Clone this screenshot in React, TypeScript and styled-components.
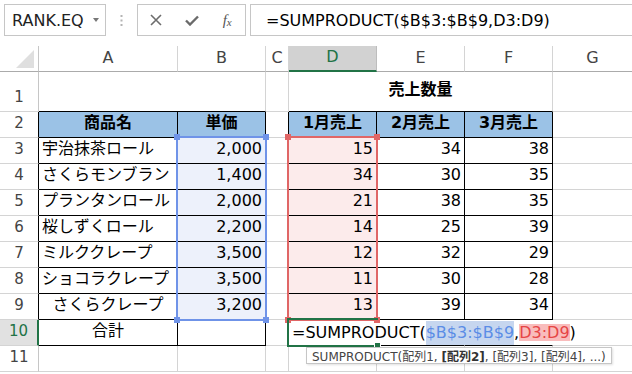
import React from "react";
import styled, { createGlobalStyle } from "styled-components";

const GlobalStyle = createGlobalStyle`
  html, body {
    margin: 0;
    padding: 0;
    background: #fff;
  }
  body {
    font-family: "DejaVu Sans", "Noto Sans CJK JP", sans-serif;
    overflow: hidden;
  }
`;

const GRID = "#d4d4d4";
const BLACK = "#000";
const GREEN = "#217346";
const HEAD_FILL = "#9bc2e6";
const BLUE = "#6f93e8";
const RED = "#e06666";
const BLUE_FILL = "#edf1fb";
const RED_FILL = "#fcebeb";

type Align = "left" | "center" | "right";

type Spec = {
  row: number;
  col: number;
  span?: number;
  text?: React.ReactNode;
  align?: Align;
  bold?: boolean;
  bg?: string;
};

const names = [
  "宇治抹茶ロール",
  "さくらモンブラン",
  "プランタンロール",
  "桜しずくロール",
  "ミルククレープ",
  "ショコラクレープ",
  "さくらクレープ",
];
const prices = ["2,000", "1,400", "2,000", "2,200", "3,500", "3,500", "3,200"];
const sales = [
  [15, 34, 38],
  [34, 30, 35],
  [21, 38, 35],
  [14, 25, 39],
  [12, 32, 29],
  [11, 30, 28],
  [13, 39, 34],
];
const colLetters = ["A", "B", "C", "D", "E", "F", "G"];

// sheet columns: 1 = A ... 7 = G ; sheet rows 1..11
const inTable = (r: number, c: number) =>
  (r >= 2 && r <= 10 && (c === 1 || c === 2)) || (r >= 2 && r <= 10 && c >= 4 && c <= 6);

const buildCells = (): Spec[] => {
  const cells: Spec[] = [];
  for (let r = 1; r <= 11; r++) {
    for (let c = 1; c <= 7; c++) {
      if (r === 1 && c === 1) {
        cells.push({ row: r, col: c, span: 2 });
        continue;
      }
      if (r === 1 && c === 2) continue;
      if (r === 1 && c === 4) {
        cells.push({ row: r, col: c, span: 3, text: "売上数量", align: "center", bold: true });
        continue;
      }
      if (r === 1 && (c === 5 || c === 6)) continue;
      const s: Spec = { row: r, col: c };
      if (r === 2) {
        const heads: Record<number, string> = { 1: "商品名", 2: "単価", 4: "1月売上", 5: "2月売上", 6: "3月売上" };
        if (heads[c]) {
          s.text = heads[c];
          s.bold = true;
          s.align = "center";
          s.bg = HEAD_FILL;
        }
      }
      if (r >= 3 && r <= 9) {
        const i = r - 3;
        if (c === 1) {
          s.text = names[i];
          s.align = r === 9 ? "center" : "left";
        }
        if (c === 2) {
          s.text = prices[i];
          s.align = "right";
          s.bg = BLUE_FILL;
        }
        if (c >= 4 && c <= 6) {
          s.text = String(sales[i][c - 4]);
          s.align = "right";
          if (c === 4) s.bg = RED_FILL;
        }
      }
      if (r === 10 && c === 1) {
        s.text = "合計";
        s.align = "center";
      }
      cells.push(s);
    }
  }
  return cells;
};

const rightColor = (s: Spec) => {
  const end = s.col + (s.span ?? 1) - 1;
  if (s.row === 10 && end >= 4 && end <= 6) return "transparent";
  if (inTable(s.row, end) || inTable(s.row, end + 1)) return BLACK;
  return GRID;
};

const bottomColor = (s: Spec) => {
  if (inTable(s.row, s.col) || inTable(s.row + 1, s.col)) return BLACK;
  return GRID;
};

const App: React.FC = () => {
  const cells = buildCells();
  return (
    <Page>
      <GlobalStyle />
      <TopBar>
        <NameBox>
          RANK.EQ
          <DropArrow />
        </NameBox>
        <Grip>
          <svg width="3" height="11" viewBox="0 0 3 11">
            <rect x="0.5" y="0" width="2" height="2" fill="#b4b4b4" />
            <rect x="0.5" y="4.5" width="2" height="2" fill="#b4b4b4" />
            <rect x="0.5" y="9" width="2" height="2" fill="#b4b4b4" />
          </svg>
        </Grip>
        <ButtonBox>
          <IconSlot>
            <svg width="12" height="12" viewBox="0 0 12 12">
              <path d="M1 1 L11 11 M11 1 L1 11" stroke="#6d6d6d" strokeWidth="1.6" fill="none" />
            </svg>
          </IconSlot>
          <IconSlot>
            <svg width="14" height="11" viewBox="0 0 14 11">
              <path d="M1 5.5 L5 9.5 L13 1.5" stroke="#6a6a6a" strokeWidth="2.4" fill="none" />
            </svg>
          </IconSlot>
          <IconSlot>
            <Fx>
              f<sub>x</sub>
            </Fx>
          </IconSlot>
        </ButtonBox>
        <FormulaBox>=SUMPRODUCT($B$3:$B$9,D3:D9)</FormulaBox>
      </TopBar>

      <Sheet>
        <Corner />
        {colLetters.map((l, i) => (
          <ColHead key={l} $col={i + 2} $active={l === "D"}>
            {l}
          </ColHead>
        ))}
        {Array.from({ length: 11 }, (_, i) => i + 1).map((r) => (
          <RowHead key={r} $row={r + 1} $active={r === 10} $edge={r >= 2 && r <= 10 ? BLACK : "#c6c6c6"}>
            {r}
          </RowHead>
        ))}
        {cells.map((s) => (
          <Cell
            key={`${s.row}-${s.col}`}
            $row={s.row + 1}
            $col={s.col + 1}
            $span={s.span ?? 1}
            $align={s.align ?? "left"}
            $bold={!!s.bold}
            $bg={s.bg ?? "#fff"}
            $right={rightColor(s)}
            $bottom={bottomColor(s)}
            $tall={s.row === 1}
          >
            {s.text}
          </Cell>
        ))}

        <RangeBox $color={BLUE} $col={3} $row={4} $rows={7}>
          <Handle $color={BLUE} $x="left" $y="top" />
          <Handle $color={BLUE} $x="right" $y="top" />
          <Handle $color={BLUE} $x="left" $y="bottom" />
          <Handle $color={BLUE} $x="right" $y="bottom" />
        </RangeBox>
        <RangeBox $color={RED} $col={5} $row={4} $rows={7}>
          <Handle $color={RED} $x="left" $y="top" />
          <Handle $color={RED} $x="right" $y="top" />
          <Handle $color={RED} $x="left" $y="bottom" />
          <Handle $color={RED} $x="right" $y="bottom" />
        </RangeBox>

        <ActiveCell>
          <FillHandle />
          <Tip>
            SUMPRODUCT(配列1, <b>[配列2]</b>, [配列3], [配列4], ...)
          </Tip>
        </ActiveCell>

        <OverflowText>
          =SUMPRODUCT(<RefBlue>$B$3:$B$9</RefBlue>,<RefRed>D3:D9</RefRed>)
        </OverflowText>
      </Sheet>
    </Page>
  );
};

const Page = styled.div`
  width: 632px;
  height: 374px;
  overflow: hidden;
  background: #fff;
`;

const TopBar = styled.div`
  display: flex;
  align-items: flex-start;
  height: 46px;
  padding: 4px 0 0 4px;
  box-sizing: border-box;
`;

const NameBox = styled.div`
  width: 102px;
  height: 32px;
  box-sizing: border-box;
  border: 1px solid #c6c6c6;
  display: flex;
  align-items: center;
  padding-left: 7px;
  font-size: 16px;
  color: #222;
`;

const DropArrow = styled.span`
  margin-left: auto;
  margin-right: 6px;
  width: 0;
  height: 0;
  border-left: 3.5px solid transparent;
  border-right: 3.5px solid transparent;
  border-top: 4px solid #777;
`;

const Grip = styled.div`
  width: 31px;
  height: 32px;
  display: flex;
  align-items: center;
  justify-content: center;
`;

const ButtonBox = styled.div`
  width: 109px;
  height: 32px;
  box-sizing: border-box;
  border: 1px solid #c6c6c6;
  display: flex;
  align-items: center;
`;

const IconSlot = styled.div`
  width: 36px;
  display: flex;
  justify-content: center;
  align-items: center;
`;

const Fx = styled.span`
  font-family: "Liberation Serif", serif;
  font-style: italic;
  font-size: 15px;
  color: #555;

  sub {
    font-size: 11px;
    vertical-align: baseline;
    position: relative;
    top: 1px;
  }
`;

const FormulaBox = styled.div`
  flex: 1;
  margin-left: 4px;
  height: 32px;
  box-sizing: border-box;
  border: 1px solid #c6c6c6;
  border-right: none;
  display: flex;
  align-items: center;
  padding-left: 15px;
  font-size: 16px;
  color: #000;
  white-space: nowrap;
`;

const Sheet = styled.div`
  display: grid;
  grid-template-columns: 39px 139px 88px 23px 88px 88px 88px 80px;
  grid-template-rows: 26px 40px repeat(10, 26px);
`;

const Corner = styled.div`
  grid-row: 1;
  grid-column: 1;
  box-sizing: border-box;
  border-right: 1px solid #c6c6c6;
  border-bottom: 1px solid #ababab;
  position: relative;

  &::after {
    content: "";
    position: absolute;
    right: 4px;
    bottom: 3px;
    width: 0;
    height: 0;
    border-left: 18px solid transparent;
    border-bottom: 18px solid #dfdfdf;
  }
`;

const ColHead = styled.div<{ $col: number; $active: boolean }>`
  grid-row: 1;
  grid-column: ${({ $col }) => $col};
  box-sizing: border-box;
  display: flex;
  align-items: center;
  justify-content: center;
  padding-bottom: 3px;
  font-size: 16px;
  color: ${({ $active }) => ($active ? GREEN : "#444")};
  background: ${({ $active }) => ($active ? "#d2d2d2" : "#fff")};
  border-right: 1px solid ${({ $active }) => ($active ? "#bdbdbd" : GRID)};
  border-bottom: ${({ $active }) => ($active ? `2px solid ${GREEN}` : "1px solid #ababab")};
`;

const RowHead = styled.div<{ $row: number; $active: boolean; $edge: string }>`
  grid-row: ${({ $row }) => $row};
  grid-column: 1;
  box-sizing: border-box;
  display: flex;
  align-items: flex-end;
  justify-content: center;
  padding-bottom: 4px;
  line-height: 20px;
  font-size: 15px;
  color: ${({ $active }) => ($active ? GREEN : "#444")};
  background: ${({ $active }) => ($active ? "#e1e1e1" : "#fff")};
  border-bottom: 1px solid ${GRID};
  border-right: ${({ $active, $edge }) => ($active ? `2px solid ${GREEN}` : `1px solid ${$edge}`)};
`;

const Cell = styled.div<{
  $row: number;
  $col: number;
  $span: number;
  $align: Align;
  $bold: boolean;
  $bg: string;
  $right: string;
  $bottom: string;
  $tall: boolean;
}>`
  grid-row: ${({ $row }) => $row};
  grid-column: ${({ $col, $span }) => `${$col} / span ${$span}`};
  box-sizing: border-box;
  display: flex;
  align-items: ${({ $tall }) => ($tall ? "center" : "flex-end")};
  justify-content: ${({ $align }) =>
    $align === "left" ? "flex-start" : $align === "right" ? "flex-end" : "center"};
  padding: 0 3px 4px 3px;
  line-height: 20px;
  font-size: 16px;
  font-weight: ${({ $bold }) => ($bold ? 700 : 400)};
  color: #000;
  white-space: nowrap;
  background: ${({ $bg }) => $bg};
  border-right: 1px solid ${({ $right }) => $right};
  border-bottom: 1px solid ${({ $bottom }) => $bottom};
`;

const RangeBox = styled.div<{ $color: string; $col: number; $row: number; $rows: number }>`
  grid-column: ${({ $col }) => $col};
  grid-row: ${({ $row, $rows }) => `${$row} / span ${$rows}`};
  margin: -2px -1px -1px -2px;
  border: 2px solid ${({ $color }) => $color};
  position: relative;
  z-index: 2;
  pointer-events: none;
`;

const Handle = styled.span<{ $color: string; $x: "left" | "right"; $y: "top" | "bottom" }>`
  position: absolute;
  width: 6px;
  height: 6px;
  background: ${({ $color }) => $color};
  ${({ $x }) => ($x === "left" ? "left: -4px;" : "right: -4px;")}
  ${({ $y }) => ($y === "top" ? "top: -4px;" : "bottom: -4px;")}
`;

const OverflowText = styled.div`
  grid-column: 5 / 9;
  grid-row: 11;
  z-index: 5;
  display: flex;
  align-items: center;
  padding: 0 0 1px 3px;
  font-size: 16px;
  color: #000;
  white-space: nowrap;
`;

const RefBlue = styled.span`
  display: inline-block;
  line-height: 24px;
  background: #c6d6ef;
  color: #5b8de6;
`;

const RefRed = styled.span`
  display: inline-block;
  line-height: 17px;
  background: #f9bcbc;
  color: #e64545;
`;

const ActiveCell = styled.div`
  grid-column: 5;
  grid-row: 11;
  margin: -2px -1px -1px -2px;
  border: 2px solid ${GREEN};
  border-right: none;
  position: relative;
  z-index: 4;
  pointer-events: none;
`;

const FillHandle = styled.span`
  position: absolute;
  right: -3px;
  bottom: -4px;
  width: 5px;
  height: 5px;
  background: ${GREEN};
  border: 1px solid #fff;
`;

const Tip = styled.div`
  position: absolute;
  left: 17px;
  top: calc(100% + 2px);
  height: 17px;
  box-sizing: border-box;
  padding: 0 5px;
  display: flex;
  align-items: center;
  background: #fff;
  border: 1px solid #c6c6c6;
  box-shadow: 1px 1px 2px rgba(0, 0, 0, 0.12);
  font-size: 12px;
  color: #444;
  white-space: pre;

  b {
    font-weight: 700;
    color: #333;
  }
`;

export default App;
